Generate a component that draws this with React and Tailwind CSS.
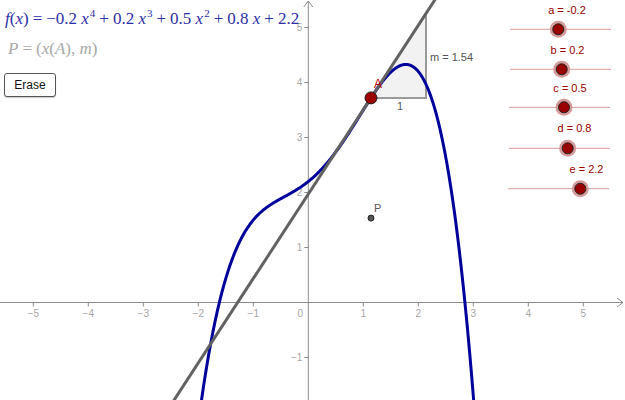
const OX = 308.3;
const OY = 302.5;
const S = 55;

const f = (x) => -0.2 * x ** 4 + 0.2 * x ** 3 + 0.5 * x ** 2 + 0.8 * x + 2.2;
const df = (x) => -0.8 * x ** 3 + 0.6 * x ** 2 + x + 0.8;

const px = (x) => OX + x * S;
const py = (y) => OY - y * S;

const xA = 1.14;
const yA = f(xA);
const m = df(xA);

const curvePath = () => {
  let d = "";
  for (let x = -2.3; x <= 3.3; x += 0.01) {
    d += `${d ? "L" : "M"}${px(x).toFixed(2)},${py(f(x)).toFixed(2)}`;
  }
  return d;
};

const sliders = [
  { label: "a = -0.2", lineY: 29.3, x1: 510, x2: 611, pt: 558.3, tx: 567, ty: 14 },
  { label: "b = 0.2", lineY: 69.3, x1: 510, x2: 611, pt: 561.7, tx: 567.5, ty: 54 },
  { label: "c = 0.5", lineY: 107.3, x1: 509, x2: 610, pt: 564, tx: 570, ty: 92 },
  { label: "d = 0.8", lineY: 148.3, x1: 509, x2: 610, pt: 567.7, tx: 574.5, ty: 132 },
  { label: "e = 2.2", lineY: 188.7, x1: 508, x2: 609, pt: 580.3, tx: 586.5, ty: 173 },
];

const xTicks = [-5, -4, -3, -2, -1, 1, 2, 3, 4, 5];
const yTicks = [-1, 1, 2, 3, 4, 5];

const Graph = () => (
  <svg width="625" height="400" viewBox="0 0 625 400" className="block">
    {/* axes */}
    <g stroke="#8c8c8c" strokeWidth="1" fill="none">
      <line x1="0" y1={OY} x2="623" y2={OY} />
      <line x1={OX} y1="400" x2={OX} y2="1" />
      <path d={`M617,${OY - 4.5}L623,${OY}L617,${OY + 4.5}`} />
      <path d={`M${OX - 4.5},7L${OX},1L${OX + 4.5},7`} />
      {xTicks.map((t) => (
        <line key={t} x1={px(t)} y1={OY} x2={px(t)} y2={OY + 4} />
      ))}
      {yTicks.map((t) => (
        <line key={t} x1={OX - 4} y1={py(t)} x2={OX} y2={py(t)} />
      ))}
    </g>
    <g fill="#a6a6a6" fontSize="10" fontFamily="'Liberation Sans', Arial, sans-serif">
      {xTicks.map((t) => (
        <text key={t} x={px(t)} y={OY + 14} textAnchor="middle">
          {t < 0 ? `\u2212${-t}` : t}
        </text>
      ))}
      <text x={OX - 8} y={OY + 14} textAnchor="middle">0</text>
      {yTicks.map((t) => (
        <text key={t} x={OX - 6} y={py(t) + 3.5} textAnchor="end">
          {t < 0 ? `\u2212${-t}` : t}
        </text>
      ))}
    </g>

    {/* slope triangle */}
    <path
      d={`M${px(xA)},${py(yA)}L${px(xA + 1)},${py(yA)}L${px(xA + 1)},${py(yA + m)}Z`}
      fill="#f2f2f2"
      stroke="#9a9a9a"
      strokeWidth="2"
    />

    {/* function */}
    <path d={curvePath()} fill="none" stroke="#00009a" strokeWidth="3" strokeLinejoin="round" />

    {/* tangent */}
    <line
      x1={px(-4)}
      y1={py(yA + m * (-4 - xA))}
      x2={px(5)}
      y2={py(yA + m * (5 - xA))}
      stroke="#626262"
      strokeWidth="3"
    />

    <g fontFamily="'Liberation Sans', Arial, sans-serif">
      <text x="430" y="61" fontSize="11" fill="#555">m = 1.54</text>
      <text x="397" y="110" fontSize="11" fill="#555">1</text>
      <text x="374" y="88" fontSize="12" fill="#c00000">A</text>
      <text x="374" y="212" fontSize="11" fill="#555">P</text>
    </g>

    {/* points */}
    <circle cx={px(xA)} cy={py(yA)} r="6" fill="#990000" stroke="#222" strokeWidth="1" />
    <circle cx={px(xA)} cy={py(m)} r="3" fill="#555" stroke="#222" strokeWidth="1" />

    {/* sliders */}
    {sliders.map((s) => (
      <g key={s.label}>
        <line x1={s.x1} y1={s.lineY} x2={s.x2} y2={s.lineY} stroke="#d69c9c" strokeWidth="1" />
        <circle cx={s.pt} cy={s.lineY} r="8.5" fill="#d69c9c" />
        <circle cx={s.pt} cy={s.lineY} r="5.5" fill="#990000" stroke="#222" strokeWidth="1" />
        <text
          x={s.tx}
          y={s.ty}
          textAnchor="middle"
          fontSize="11"
          fill="#990000"
          fontFamily="'Liberation Sans', Arial, sans-serif"
        >
          {s.label}
        </text>
      </g>
    ))}
  </svg>
);

const Sup = ({ children }) => (
  <span className="inline-block text-[11px] leading-none align-baseline -translate-y-[7px] ml-[1px]">{children}</span>
);
const Op = ({ children }) => <span className="px-[4px]">{children}</span>;

export default function App() {
  return (
    <div className="relative w-[625px] h-[400px] bg-white overflow-hidden">
      <Graph />

      <div className="absolute left-[5px] top-[8px] flex flex-col items-start font-['Liberation_Serif',serif]">
        <div className="text-[17px] leading-[22px] text-[#2e2ea6] whitespace-nowrap">
          <i>f</i>(<i>x</i>)<Op>=</Op>−0.2 <i>x</i><Sup>4</Sup><Op>+</Op>0.2 <i>x</i><Sup>3</Sup><Op>+</Op>0.5 <i>x</i>
          <Sup>2</Sup><Op>+</Op>0.8 <i>x</i><Op>+</Op>2.2
        </div>
        <div className="mt-[8px] ml-[3px] text-[17px] leading-[22px] text-[#a8a8a8] whitespace-nowrap">
          <i>P</i><Op>=</Op>(<i>x</i>(<i>A</i>), <i>m</i>)
        </div>
        <button className="mt-[13px] -ml-[1px] w-[52px] h-[24px] rounded-[3px] border-[1.5px] border-[#555] bg-white text-[12px] text-[#111] font-['Liberation_Sans',Arial,sans-serif] shadow-[0_1px_1px_rgba(0,0,0,0.2)]">
          Erase
        </button>
      </div>
    </div>
  );
}
